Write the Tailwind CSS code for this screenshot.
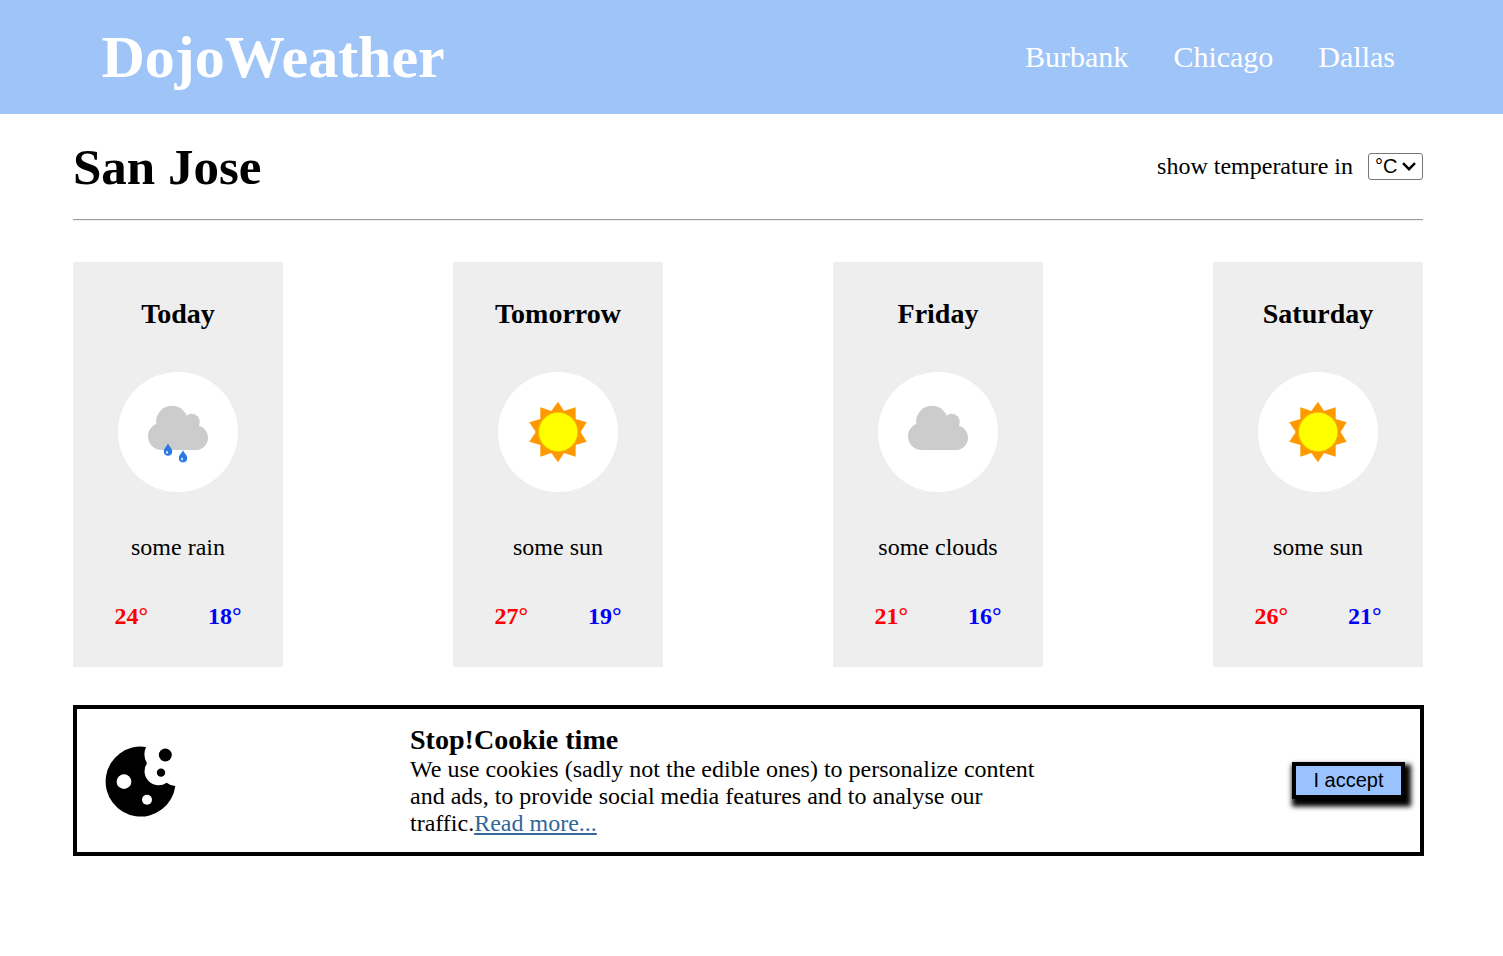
<!DOCTYPE html>
<html lang="en">
<head>
<meta charset="utf-8">
<title>DojoWeather</title>
<script src="https://cdn.jsdelivr.net/npm/@tailwindcss/browser@4"></script>
</head>
<body class="bg-white text-black font-['Liberation_Serif','Times_New_Roman',serif] text-[24px] leading-[27px]">
<svg class="hidden">
  <symbol id="cloud" viewBox="24 21 360 360">
    <g fill="#ccc"><circle cx="155" cy="214" r="41"/><circle cx="186" cy="170" r="47.500"/><circle cx="245" cy="171" r="24.500"/><circle cx="257" cy="218" r="37"/><path d="M155 255V185L230 160L257 185V255Z"/></g>
  </symbol>
  <symbol id="drop" viewBox="0 0 26 38">
    <path fill="#2b78e4" d="M13 0C15 9 26 15 26 25A13 12.500 0 0 1 0 25C0 15 11 9 13 0Z"/>
    <ellipse cx="10" cy="27" rx="3" ry="4.500" fill="#d5e4fa"/>
  </symbol>
  <symbol id="sun" viewBox="24 21 360 360">
    <path fill="#f90" d="M204 110L222 138L257 127V162L290 172L272 201L290 230L257 240V275L222 264L204 292L184 264L151 275V240L118 230L137 201L118 172L151 162V127L184 138Z"/>
    <circle cx="204.500" cy="201" r="58.500" fill="#ff0" stroke="#e8c800" stroke-width="2"/>
  </symbol>
</svg>

<header class="h-[114px] bg-[#9fc5f8] text-white flex items-center justify-between pl-[101.500px] pr-[108px]">
  <h1 class="text-[60px] leading-[68px] font-bold">DojoWeather</h1>
  <nav class="flex gap-[45px] text-[30px] leading-[34px]">
    <a>Burbank</a><a>Chicago</a><a>Dallas</a>
  </nav>
</header>

<main class="ml-[73px] w-[1350px]">
  <div class="h-[105px] flex items-center justify-between">
    <h2 class="text-[51px] leading-[57px] font-bold pt-[2px]">San Jose</h2>
    <div class="flex items-center gap-[15px]">
      <span>show temperature in</span>
      <div class="w-[55px] h-[27px] border border-[#767676] rounded-[3px] flex items-center pl-[6px] gap-[5px] font-['Liberation_Sans',Arial,sans-serif] text-[20px] leading-[23px]">
        <span>°C</span>
        <svg class="w-[14px] h-[9px]" viewBox="0 0 14 9" fill="none" stroke="#000" stroke-width="2.400"><path d="M1 1.200L7 7.200L13 1.200"/></svg>
      </div>
    </div>
  </div>
  <div class="h-[2px] border-t border-b border-t-[#9a9a9a] border-b-[#eee]"></div>

  <section class="mt-[41px] flex justify-between">
    <article class="w-[210px] h-[405px] bg-[#eee] flex flex-col items-center pt-[36px]">
      <h3 class="text-[28px] leading-[32px] font-bold">Today</h3>
      <div class="mt-[42px] w-[120px] h-[120px] rounded-full bg-white">
        <svg class="w-[120px] h-[120px]" viewBox="24 21 360 360"><use href="#cloud" x="24" y="21" width="360" height="360"/><use href="#drop" x="161" y="235" width="26" height="38"/><use href="#drop" x="206" y="255" width="26" height="38"/></svg>
      </div>
      <p class="mt-[42px]">some rain</p>
      <div class="mt-[42px] flex gap-[60px] font-bold"><span class="text-[#f00]">24°</span><span class="text-[#00f]">18°</span></div>
    </article>
    <article class="w-[210px] h-[405px] bg-[#eee] flex flex-col items-center pt-[36px]">
      <h3 class="text-[28px] leading-[32px] font-bold">Tomorrow</h3>
      <div class="mt-[42px] w-[120px] h-[120px] rounded-full bg-white">
        <svg class="w-[120px] h-[120px]"><use href="#sun"/></svg>
      </div>
      <p class="mt-[42px]">some sun</p>
      <div class="mt-[42px] flex gap-[60px] font-bold"><span class="text-[#f00]">27°</span><span class="text-[#00f]">19°</span></div>
    </article>
    <article class="w-[210px] h-[405px] bg-[#eee] flex flex-col items-center pt-[36px]">
      <h3 class="text-[28px] leading-[32px] font-bold">Friday</h3>
      <div class="mt-[42px] w-[120px] h-[120px] rounded-full bg-white">
        <svg class="w-[120px] h-[120px]"><use href="#cloud"/></svg>
      </div>
      <p class="mt-[42px]">some clouds</p>
      <div class="mt-[42px] flex gap-[60px] font-bold"><span class="text-[#f00]">21°</span><span class="text-[#00f]">16°</span></div>
    </article>
    <article class="w-[210px] h-[405px] bg-[#eee] flex flex-col items-center pt-[36px]">
      <h3 class="text-[28px] leading-[32px] font-bold">Saturday</h3>
      <div class="mt-[42px] w-[120px] h-[120px] rounded-full bg-white">
        <svg class="w-[120px] h-[120px]"><use href="#sun"/></svg>
      </div>
      <p class="mt-[42px]">some sun</p>
      <div class="mt-[42px] flex gap-[60px] font-bold"><span class="text-[#f00]">26°</span><span class="text-[#00f]">21°</span></div>
    </article>
  </section>

  <section class="mt-[38px] w-[1351px] h-[151px] border-4 border-black flex items-center justify-between pl-[28px] pr-[15px]">
    <svg class="w-[71px] h-[71px] mt-[2px]" viewBox="120 139 213 213">
      <path d="M243 142A105 105 0 1 0 331 259Q318 259 305 249A42 42 0 0 1 246 191Q232 168 243 142Z"/>
      <circle cx="301" cy="166" r="19.500"/><circle cx="288" cy="219" r="12.500"/>
      <circle cx="177" cy="246" r="22" fill="#fff"/><circle cx="246" cy="300" r="15" fill="#fff"/>
    </svg>
    <div class="w-[648px]">
      <h3 class="text-[28.080px] leading-[32px] font-bold">Stop!Cookie time</h3>
      <p>We use cookies (sadly not the edible ones) to personalize content and ads, to provide social media features and to analyse our traffic.<a class="underline text-[#336699]">Read more...</a></p>
    </div>
    <button class="w-[113px] h-[37px] border-4 border-black bg-[#99c2ff] shadow-[3px_4.500px_5px_3px_#000] font-['Liberation_Sans',Arial,sans-serif] text-[20px] leading-[23px]">I accept</button>
  </section>
</main>
</body>
</html>
